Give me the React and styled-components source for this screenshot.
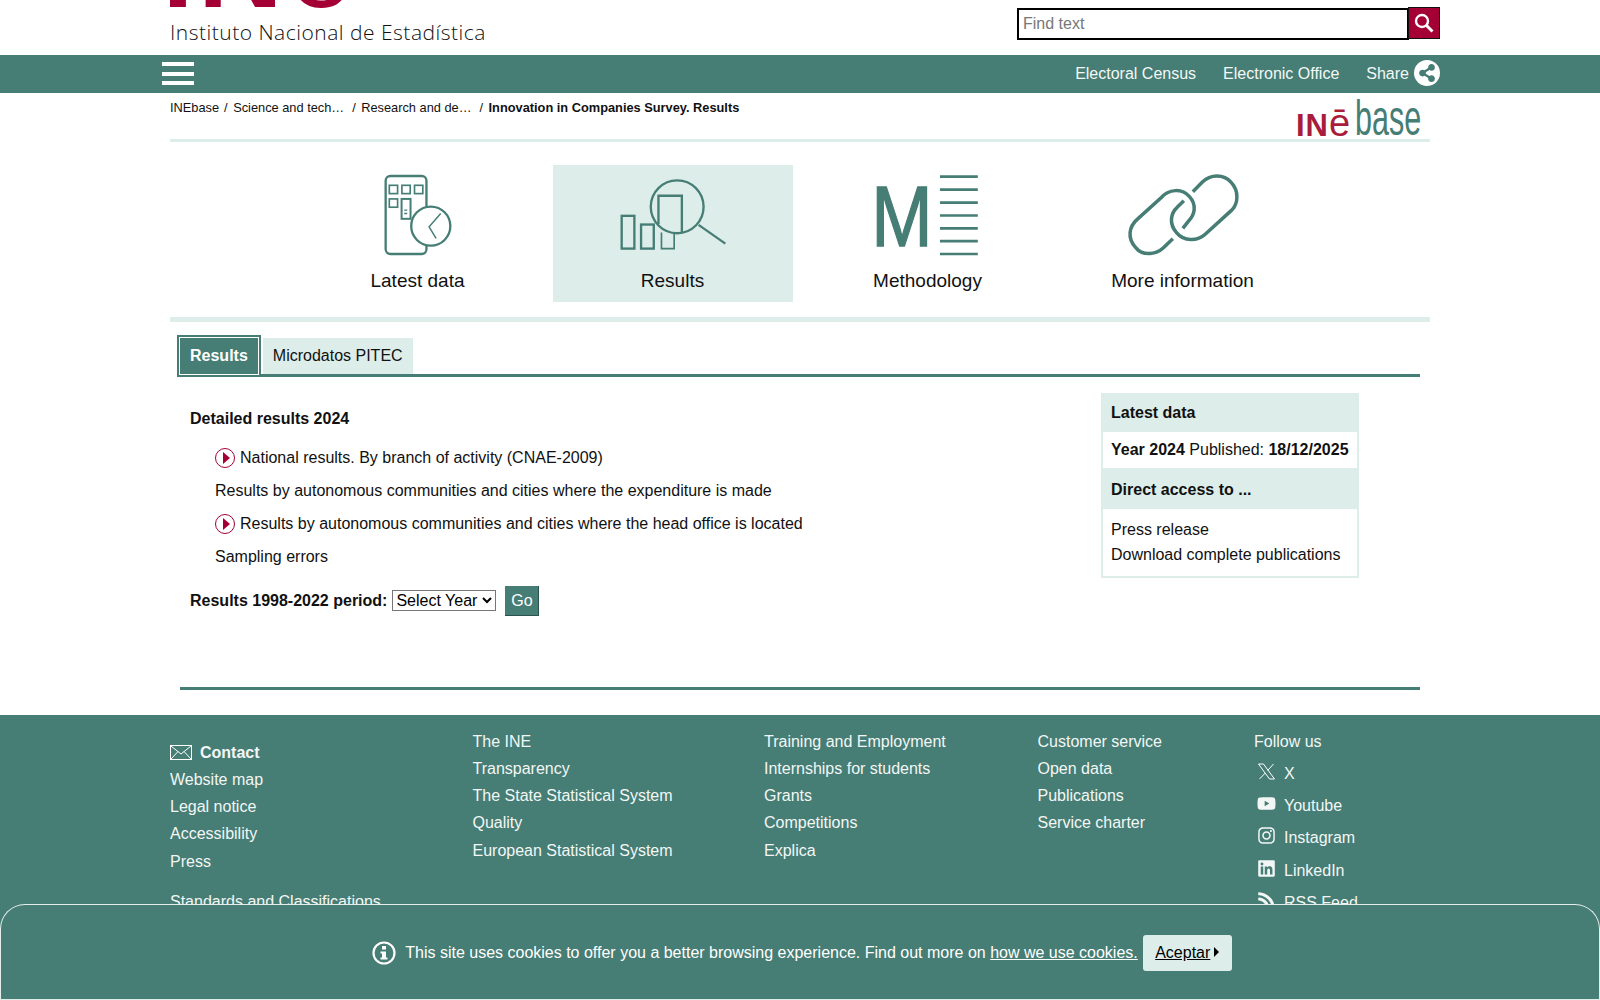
import React from 'react'
import styled, { createGlobalStyle } from 'styled-components'
import { FaShareAlt, FaYoutube, FaInstagram, FaLinkedin, FaRss } from 'react-icons/fa'

const TEAL = '#467d74'
const PALE = '#ddedea'
const RED = '#a50035'

const GlobalStyle = createGlobalStyle`
  html, body {
    margin: 0;
    height: 1000px;
    overflow: hidden;
    background: #fff;
  }
  body {
    font-family: "Liberation Sans", Arial, sans-serif;
    font-size: 16px;
    color: #111;
  }
  a {
    color: inherit;
    text-decoration: none;
  }
`

const Header = styled.header`
  height: 55px;
  padding: 0 160px 0 170px;
  display: flex;
  justify-content: space-between;
  overflow: hidden;
`

const LogoBlock = styled.div`
  display: flex;
  flex-direction: column;
`

const LogoMark = styled.div`
  height: 11px;
  overflow: hidden;
  color: ${RED};
  line-height: 1;
`

const LogoGlyphs = styled.div`
  display: flex;
  align-items: baseline;
  margin: -93px 0 0 -9px;
  font-size: 118px;
  white-space: nowrap;
  b {
    letter-spacing: 4px;
  }
  span {
    margin-left: 2px;
    font-size: 113px;
  }
`

const LogoName = styled.div`
  margin-top: 8px;
  font-family: "Open Sans", "Noto Sans", sans-serif;
  font-weight: 300;
  font-size: 21px;
  line-height: 26px;
  letter-spacing: 0.5px;
  color: #111;
  white-space: nowrap;
`

const SearchForm = styled.form`
  display: flex;
  align-items: flex-start;
  margin: 7px 0 0;
`

const SearchInput = styled.input`
  box-sizing: border-box;
  width: 392px;
  height: 32px;
  margin-top: 1px;
  border: 2px solid #000;
  padding: 0 4px;
  font: 16px "Liberation Sans", Arial, sans-serif;
  outline: none;
  &::placeholder {
    color: #777;
  }
`

const SearchButton = styled.button`
  box-sizing: border-box;
  width: 32px;
  height: 32px;
  margin-left: -1px;
  padding: 0;
  border: 1px solid #111;
  background: ${RED};
  display: flex;
  align-items: center;
  justify-content: center;
`

const NavBar = styled.nav`
  height: 38px;
  background: ${TEAL};
  padding: 0 160px 0 162px;
  display: flex;
  align-items: center;
  justify-content: space-between;
  color: #f4f8f7;
`

const Burger = styled.div`
  width: 32px;
  height: 23px;
  margin-top: -1px;
  display: flex;
  flex-direction: column;
  justify-content: space-between;
  i {
    display: block;
    height: 4px;
    background: #fff;
  }
`

const NavLinks = styled.div`
  display: flex;
  align-items: center;
  gap: 27px;
`

const ShareLink = styled.a`
  display: flex;
  align-items: center;
  gap: 5px;
`

const ShareBadge = styled.span`
  width: 26px;
  height: 26px;
  margin-top: -3px;
  border-radius: 50%;
  background: #fff;
  color: ${TEAL};
  display: flex;
  align-items: center;
  justify-content: center;
`

const Container = styled.main`
  width: 1260px;
  margin: 0 auto;
`

const CrumbRow = styled.div`
  height: 46px;
  border-bottom: 3px solid ${PALE};
  display: flex;
  justify-content: space-between;
`

const Crumbs = styled.div`
  display: flex;
  align-items: center;
  height: 29px;
  font-size: 12.8px;
  white-space: nowrap;
  b {
    font-weight: 700;
  }
`

const Sep = styled.span`
  margin: 0 5.5px;
  margin-left: ${(p) => p.$left || 5}px;
`

const BaseLogo = styled.div`
  width: 124px;
  height: 46px;
  margin-right: 9px;
  display: flex;
  align-items: flex-end;
  justify-content: space-between;
  white-space: nowrap;
`

const BaseIne = styled.span`
  color: #aa1c3c;
  font-size: 31px;
  line-height: 28px;
  letter-spacing: 1px;
  font-weight: 700;
  margin: 0 0 -1px -1px;
  span {
    font-weight: 400;
    font-size: 38px;
    margin-left: 0;
    letter-spacing: 0;
  }
`

const BaseWord = styled.span`
  display: inline-block;
  width: 66px;
  color: ${TEAL};
  font-size: 50px;
  line-height: 50px;
  margin-bottom: -3.7px;
  transform: scaleX(0.61);
  transform-origin: left bottom;
`

const Tiles = styled.div`
  width: 1005px;
  margin: 23px auto 0;
  display: flex;
  justify-content: space-between;
`

const Tile = styled.a`
  box-sizing: border-box;
  width: 240px;
  height: 137px;
  padding-top: 8px;
  background: ${(p) => (p.$active ? PALE : 'transparent')};
  display: flex;
  flex-direction: column;
  align-items: center;
  font-size: 19px;
`

const TileIcon = styled.div`
  height: 84px;
  margin-bottom: 13px;
  display: flex;
  align-items: center;
  justify-content: center;
`

const ThickRule = styled.div`
  height: 5px;
  margin-top: 15px;
  background: ${PALE};
`

const TabRow = styled.div`
  height: 39px;
  margin: 13px 10px 0;
  border-bottom: 3px solid ${TEAL};
  display: flex;
  align-items: flex-end;
  gap: 2px;
`

const Tab = styled.a`
  box-sizing: border-box;
  height: ${(p) => (p.$active ? 42 : 36)}px;
  padding: 0 ${(p) => (p.$active ? 11 : 10)}px;
  margin-left: ${(p) => (p.$active ? -3 : 0)}px;
  margin-bottom: ${(p) => (p.$active ? -3 : 0)}px;
  display: flex;
  align-items: center;
  background: ${(p) => (p.$active ? TEAL : PALE)};
  color: ${(p) => (p.$active ? '#fff' : '#111')};
  font-weight: ${(p) => (p.$active ? 700 : 400)};
  border: ${(p) => (p.$active ? `2px solid ${TEAL}` : 'none')};
  box-shadow: ${(p) => (p.$active ? 'inset 0 0 0 1px #fff' : 'none')};
`

const Body = styled.section`
  height: 310px;
  margin: 0 10px;
  border-bottom: 3px solid ${TEAL};
  display: flex;
  justify-content: space-between;
`

const Results = styled.div`
  padding: 25px 0 0 10px;
`

const Heading = styled.div`
  font-weight: 700;
  line-height: 33px;
  margin-bottom: 6px;
`

const ResultList = styled.ul`
  list-style: none;
  margin: 0;
  padding: 0 0 0 25px;
`

const ResultItem = styled.li`
  height: 33.2px;
  display: flex;
  align-items: center;
  gap: 5px;
`

const PlayMark = styled.span`
  box-sizing: border-box;
  width: 20px;
  height: 20px;
  border: 1.5px solid ${RED};
  border-radius: 50%;
  display: flex;
  align-items: center;
  justify-content: center;
  &::after {
    content: '';
    margin-left: 2px;
    border-left: 7px solid ${RED};
    border-top: 6px solid transparent;
    border-bottom: 6px solid transparent;
  }
`

const PeriodRow = styled.form`
  margin-top: 12px;
  display: flex;
  align-items: center;
  font-weight: 700;
`

const YearSelect = styled.select`
  width: 104px;
  height: 21px;
  margin-left: 5px;
  font: 16px "Liberation Sans", Arial, sans-serif;
  padding: 0;
  text-indent: -1px;
  background: #fff;
`

const GoButton = styled.button`
  box-sizing: border-box;
  width: 34px;
  height: 30px;
  margin-left: 9px;
  padding: 2px 0 0;
  border: none;
  border-right: 1px solid #2c524c;
  border-bottom: 1px solid #2c524c;
  background: ${TEAL};
  color: #fff;
  font: 16px "Liberation Sans", Arial, sans-serif;
`

const Aside = styled.aside`
  box-sizing: border-box;
  width: 258px;
  height: 185px;
  margin: 16px 61px 0 0;
  border: 2px solid ${PALE};
`

const AsideHead = styled.div`
  box-sizing: border-box;
  height: ${(p) => p.$h}px;
  margin: ${(p) => (p.$first ? '-2px -2px 0' : '0 -2px')};
  padding: ${(p) => (p.$first ? 0 : 2)}px 0 0 10px;
  display: flex;
  align-items: center;
  background: ${PALE};
  font-weight: 700;
`

const AsideRow = styled.div`
  height: 36px;
  padding-left: 8px;
  display: flex;
  align-items: center;
  white-space: pre;
`

const AsideLinks = styled.div`
  padding: 8px 0 0 8px;
  line-height: 25px;
`

const Footer = styled.footer`
  box-sizing: border-box;
  margin-top: 25px;
  height: 285px;
  background: ${TEAL};
  color: #f2f7f6;
  padding: 12.8px 0 0 170px;
  display: grid;
  grid-template-columns: 302.5px 291.5px 273.5px 216.5px 1fr;
`

const FootColumn = styled.div`
  display: flex;
  flex-direction: column;
  padding-top: ${(p) => p.$top || 0}px;
`

const FootLink = styled.a`
  line-height: 27.2px;
  margin-top: ${(p) => p.$gap || 0}px;
  display: flex;
  align-items: center;
  gap: 7px;
  font-weight: ${(p) => (p.$bold ? 700 : 400)};
`

const SocialList = styled.div`
  display: flex;
  flex-direction: column;
  margin-top: 2.6px;
`

const SocialLink = styled.a`
  height: 32.35px;
  display: flex;
  align-items: center;
  svg {
    width: 19px;
    height: 19px;
    margin: -5px 8px 0 3px;
  }
`

const CookieBar = styled.div`
  position: fixed;
  left: 0;
  right: 0;
  top: 904px;
  height: 95px;
  box-sizing: border-box;
  border: 1px solid #e4efed;
  border-bottom: none;
  border-radius: 25px 25px 0 0;
  background: ${TEAL};
  color: #fff;
  display: flex;
  align-items: center;
  justify-content: center;
  padding: 2px 0 0 4px;
  &::after {
    content: '';
    position: absolute;
    left: -1px;
    right: -1px;
    bottom: -1px;
    height: 1px;
    background: ${PALE};
  }
`

const CookieText = styled.span`
  margin: 0 5px 0 9px;
  a {
    text-decoration: underline;
  }
`

const AcceptButton = styled.a`
  box-sizing: border-box;
  width: 89px;
  height: 36px;
  border-radius: 3px;
  background: ${PALE};
  color: #000;
  display: flex;
  align-items: center;
  justify-content: center;
  gap: 4px;
  u {
    text-decoration: underline;
  }
  &::after {
    content: '';
    margin-top: -2px;
    border-left: 5px solid #000;
    border-top: 5px solid transparent;
    border-bottom: 5px solid transparent;
  }
`

const tileItems = [
  { label: 'Latest data', icon: <LatestIcon /> },
  { label: 'Results', icon: <ResultsIcon />, active: true },
  { label: 'Methodology', icon: <MethodIcon /> },
  { label: 'More information', icon: <LinkIcon /> },
]

const footerCols = [
  ['The INE', 'Transparency', 'The State Statistical System', 'Quality', 'European Statistical System'],
  ['Training and Employment', 'Internships for students', 'Grants', 'Competitions', 'Explica'],
  ['Customer service', 'Open data', 'Publications', 'Service charter'],
]

const socials = [
  { name: 'X', icon: <XIcon /> },
  { name: 'Youtube', icon: <FaYoutube /> },
  { name: 'Instagram', icon: <FaInstagram /> },
  { name: 'LinkedIn', icon: <FaLinkedin /> },
  { name: 'RSS Feed', icon: <FaRss /> },
]

function LatestIcon() {
  return (
    <svg width="68" height="83" viewBox="130 42 205 248" fill="none" stroke={TEAL}>
      <rect x="135" y="47" width="123" height="235" rx="14" strokeWidth="7" />
      <g strokeWidth="5">
        <rect x="146" y="75" width="25" height="25" />
        <rect x="184" y="75" width="25" height="25" />
        <rect x="222" y="75" width="25" height="25" />
        <rect x="146" y="116" width="25" height="25" />
      </g>
      <rect x="183" y="116" width="27" height="60" strokeWidth="6" />
      <path d="M191 150h9M191 160h9" strokeWidth="4" />
      <circle cx="271" cy="198" r="59" fill="#fff" strokeWidth="7" />
      <path d="M301 160L266 200L287 235" strokeWidth="4.5" />
    </svg>
  )
}

function ResultsIcon() {
  return (
    <svg width="107" height="72" viewBox="837 55 320 215" fill="none" stroke={TEAL} strokeWidth="7">
      <rect x="845" y="165" width="38" height="98" />
      <rect x="903" y="191" width="38" height="72" />
      <path d="M964 215V263H1002V215" strokeWidth="5" />
      <path d="M955 190V105H1025V215" />
      <circle cx="1011" cy="138" r="79" />
      <path d="M1075 192L1155 248" />
    </svg>
  )
}

function MethodIcon() {
  return (
    <svg width="105" height="83" viewBox="105 40 315 250" fill={TEAL} stroke="none" overflow="visible">
      <text
        transform="translate(93 258) scale(.87 1)"
        fontFamily="Liberation Sans"
        fontSize="255"
        stroke={TEAL}
        strokeWidth="4"
      >
        M
      </text>
      <path
        d="M300 48h114M300 87h114M300 126h114M300 165h114M300 204h114M300 242h114M300 281h114"
        stroke={TEAL}
        strokeWidth="8"
      />
    </svg>
  )
}

function LinkIcon() {
  return (
    <svg width="112" height="82" viewBox="860 42 335 246" fill="none" stroke={TEAL} strokeWidth="10.5">
      <path d="M997 236L968 264C945 285 905 288 885 262C860 235 865 200 890 178L960 115C985 85 1025 85 1047 110C1070 135 1062 165 1045 182L1027 205" />
      <path d="M1057 95L1085 67C1110 42 1150 42 1172 67C1195 92 1195 130 1172 152L1095 222C1070 245 1030 245 1008 218C985 192 990 160 1010 142L1030 122" />
    </svg>
  )
}

function XIcon() {
  return (
    <svg viewBox="0 0 19 19" fill="none" stroke="#fff" strokeWidth="1">
      <path d="M1.5 2H6.5L17.5 17H12.5Z" />
      <path d="M16.5 2L10.7 8.5M8.3 11L2.5 17" />
    </svg>
  )
}

function SearchIcon() {
  return (
    <svg width="20" height="20" viewBox="0 0 20 20" fill="none" stroke="#fff">
      <circle cx="8" cy="8" r="6" strokeWidth="2.4" />
      <path d="M12.5 12.5L18.5 18.5" strokeWidth="3" />
    </svg>
  )
}

function MailIcon() {
  return (
    <svg width="23" height="15" viewBox="0 0 23 15" fill="none" stroke="#fff" strokeWidth="1">
      <rect x="0.5" y="0.5" width="21" height="14" />
      <path d="M1 1L11 9L21 1M1 14L8 6.5M21 14L14 6.5" />
    </svg>
  )
}

function InfoIcon() {
  return (
    <svg width="24" height="24" viewBox="0 0 24 24">
      <circle cx="12" cy="12" r="10.5" fill="none" stroke="#fff" strokeWidth="2.2" />
      <rect x="10" y="5" width="4" height="3.5" fill="#fff" />
      <path d="M8.5 10.5H14V16.5H15.5V18.5H8.5V16.5H10V12.5H8.5Z" fill="#fff" />
    </svg>
  )
}

export default function App() {
  return (
    <>
      <GlobalStyle />
      <Header>
        <LogoBlock>
          <LogoMark>
            <LogoGlyphs>
              <b>IN</b>
              <span>e</span>
            </LogoGlyphs>
          </LogoMark>
          <LogoName>Instituto Nacional de Estadística</LogoName>
        </LogoBlock>
        <SearchForm>
          <SearchInput placeholder="Find text" />
          <SearchButton type="button">
            <SearchIcon />
          </SearchButton>
        </SearchForm>
      </Header>

      <NavBar>
        <Burger>
          <i />
          <i />
          <i />
        </Burger>
        <NavLinks>
          <a href="#censo">Electoral Census</a>
          <a href="#sede">Electronic Office</a>
          <ShareLink href="#share">
            Share
            <ShareBadge>
              <FaShareAlt size={18} />
            </ShareBadge>
          </ShareLink>
        </NavLinks>
      </NavBar>

      <Container>
        <CrumbRow>
          <Crumbs>
            INEbase
            <Sep>/</Sep>
            Science and tech…
            <Sep $left={8}>/</Sep>
            Research and de…
            <Sep $left={8}>/</Sep>
            <b>Innovation in Companies Survey. Results</b>
          </Crumbs>
          <BaseLogo>
            <BaseIne>
              IN<span>ē</span>
            </BaseIne>
            <BaseWord>base</BaseWord>
          </BaseLogo>
        </CrumbRow>

        <Tiles>
          {tileItems.map((t) => (
            <Tile key={t.label} $active={t.active}>
              <TileIcon>{t.icon}</TileIcon>
              {t.label}
            </Tile>
          ))}
        </Tiles>
        <ThickRule />

        <TabRow>
          <Tab $active>Results</Tab>
          <Tab>Microdatos PITEC</Tab>
        </TabRow>

        <Body>
          <Results>
            <Heading>Detailed results 2024</Heading>
            <ResultList>
              <ResultItem>
                <PlayMark />
                National results. By branch of activity (CNAE-2009)
              </ResultItem>
              <ResultItem>Results by autonomous communities and cities where the expenditure is made</ResultItem>
              <ResultItem>
                <PlayMark />
                Results by autonomous communities and cities where the head office is located
              </ResultItem>
              <ResultItem>Sampling errors</ResultItem>
            </ResultList>
            <PeriodRow>
              Results 1998-2022 period:
              <YearSelect defaultValue="">
                <option value="">Select Year</option>
                <option value="2022">2022</option>
                <option value="2021">2021</option>
              </YearSelect>
              <GoButton type="button">Go</GoButton>
            </PeriodRow>
          </Results>

          <Aside>
            <AsideHead $first $h={39}>Latest data</AsideHead>
            <AsideRow>
              <b>Year 2024</b> Published: <b>18/12/2025</b>
            </AsideRow>
            <AsideHead $h={41}>Direct access to ...</AsideHead>
            <AsideLinks>
              Press release
              <br />
              Download complete publications
            </AsideLinks>
          </Aside>
        </Body>
      </Container>

      <Footer>
        <FootColumn $top={11}>
          <FootLink $bold>
            <MailIcon />
            Contact
          </FootLink>
          <FootLink>Website map</FootLink>
          <FootLink>Legal notice</FootLink>
          <FootLink>Accessibility</FootLink>
          <FootLink>Press</FootLink>
          <FootLink $gap={13}>Standards and Classifications</FootLink>
        </FootColumn>
        {footerCols.map((col) => (
          <FootColumn key={col[0]}>
            {col.map((item) => (
              <FootLink key={item}>{item}</FootLink>
            ))}
          </FootColumn>
        ))}
        <FootColumn>
          <FootLink>Follow us</FootLink>
          <SocialList>
            {socials.map((s) => (
              <SocialLink key={s.name}>
                {s.icon}
                {s.name}
              </SocialLink>
            ))}
          </SocialList>
        </FootColumn>
      </Footer>

      <CookieBar>
        <InfoIcon />
        <CookieText>
          This site uses cookies to offer you a better browsing experience. Find out more on{' '}
          <a href="#cookies">how we use cookies.</a>
        </CookieText>
        <AcceptButton>
          <u>Aceptar</u>
        </AcceptButton>
      </CookieBar>
    </>
  )
}
